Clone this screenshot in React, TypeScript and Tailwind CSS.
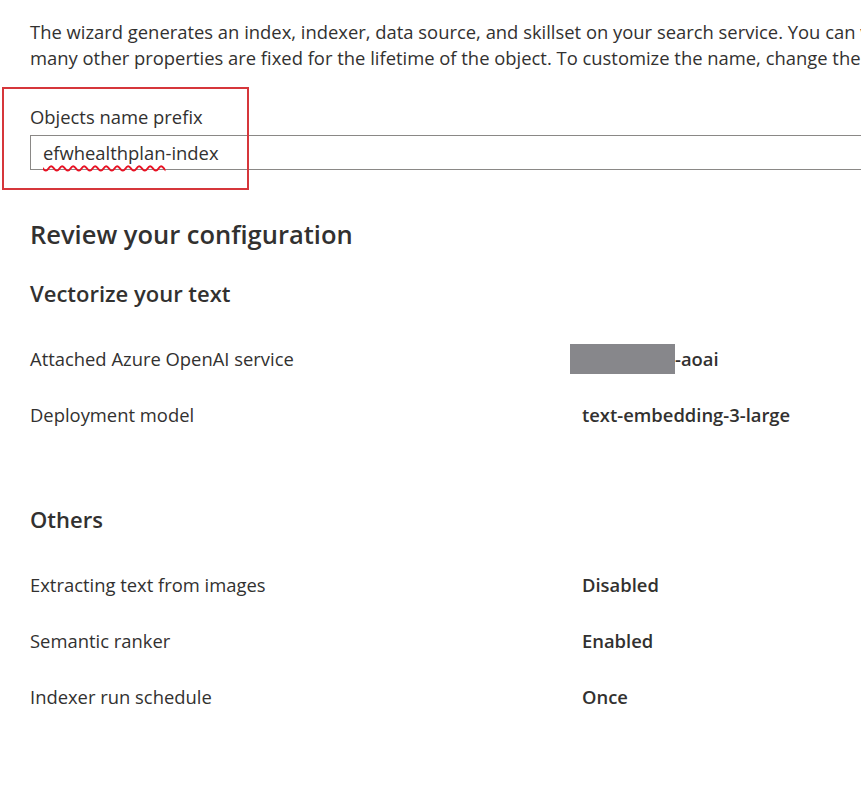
export default function App() {
    const vectorRows = [
        { label: "Attached Azure OpenAI service", value: "-aoai", redacted: true },
        { label: "Deployment model", value: "text-embedding-3-large" },
    ]
    const otherRows = [
        { label: "Extracting text from images", value: "Disabled" },
        { label: "Semantic ranker", value: "Enabled" },
        { label: "Indexer run schedule", value: "Once" },
    ]

    return (
        <div className="w-[861px] h-[785px] overflow-hidden bg-white text-[#323130] font-['Open_Sans',sans-serif]">
            <div className="w-[1200px] pl-[30px]">
                <div className="pt-[19px] text-[18.4px] leading-[26px]">
                    <div className="whitespace-nowrap">
                        The wizard generates an index, indexer, data source, and skillset on your search service. You can view and edit these objects after they are created, but
                    </div>
                    <div className="whitespace-nowrap">
                        many other properties are fixed for the lifetime of the object. To customize the name, change the prefix below.
                    </div>
                </div>

                <div className="relative mt-[16px] pb-[20px]">
                    <div className="absolute left-[-28px] top-0 w-[247px] h-[103px] border-2 border-[#d6363b]"></div>
                    <div className="pt-[18px] text-[18.4px] leading-[24px]">Objects name prefix</div>
                    <div className="mt-[6px] h-[35px] border border-[#8a8886] flex items-center pl-[12px] text-[18.4px]">
                        <span className="underline decoration-wavy decoration-[#e81123] decoration-[1.5px] underline-offset-[5px]">efwhealthplan</span>
                        <span>-index</span>
                    </div>
                </div>

                <div className="mt-[27px] text-[25.5px] font-semibold leading-[34px]">Review your configuration</div>
                <div className="mt-[27px] text-[22px] font-semibold leading-[30px]">Vectorize your text</div>

                <div className="mt-[23px] flex flex-col">
                    {vectorRows.map((row) => (
                        <div key={row.label} className="flex items-center h-[56px] text-[18.4px]">
                            <div className="w-[552px]">{row.label}</div>
                            <div className="flex items-center font-semibold">
                                {row.redacted ? (
                                    <span className="inline-block w-[105px] h-[30px] bg-[#87878b] ml-[-12px]"></span>
                                ) : null}
                                <span>{row.value}</span>
                            </div>
                        </div>
                    ))}
                </div>

                <div className="mt-[61px] text-[22px] font-semibold leading-[30px]">Others</div>

                <div className="mt-[23px] flex flex-col">
                    {otherRows.map((row) => (
                        <div key={row.label} className="flex items-center h-[56px] text-[18.4px]">
                            <div className="w-[552px]">{row.label}</div>
                            <div className="font-semibold">{row.value}</div>
                        </div>
                    ))}
                </div>
            </div>
        </div>
    )
}
